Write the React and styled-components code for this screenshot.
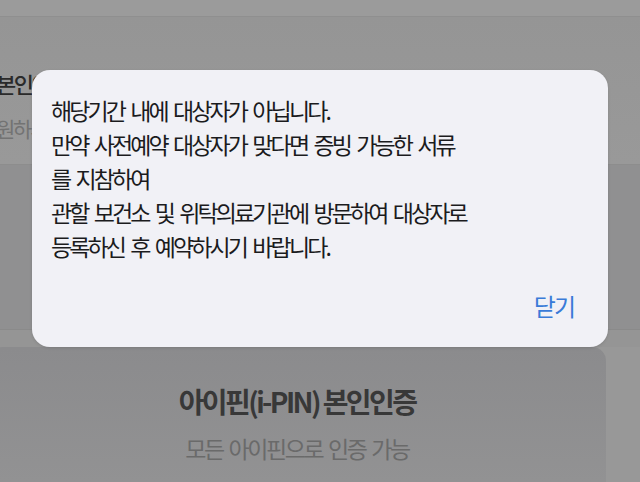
import React from "react";
import styled, { createGlobalStyle } from "styled-components";

const GlobalStyle = createGlobalStyle`
  html, body {
    margin: 0;
    padding: 0;
    background: #979797;
  }
  body {
    font-family: "Noto Sans CJK KR", "Noto Sans", sans-serif;
  }
`;

const lines = [
  "해당기간 내에 대상자가 아닙니다.",
  "만약 사전예약 대상자가 맞다면 증빙 가능한 서류",
  "를 지참하여",
  "관할 보건소 및 위탁의료기관에 방문하여 대상자로",
  "등록하신 후 예약하시기 바랍니다.",
];

const App = () => {
  const [open, setOpen] = React.useState(true);

  return (
    <>
      <GlobalStyle />
      <Page>
        <Header />
        <Intro>
          <Title>본인인증</Title>
          <Sub>원하시는 인증 방법</Sub>
        </Intro>
        <Panel />
        <Band />
        <Card>
          <CardTitle>아이핀(i-PIN) 본인인증</CardTitle>
          <CardSub>모든 아이핀으로 인증 가능</CardSub>
        </Card>

        {open ? (
          <Dialog>
            <Message>
              {lines.map((l, i) => (
                <Line key={i}>{l}</Line>
              ))}
            </Message>
            <Actions>
              <Close onClick={() => setOpen(false)}>닫기</Close>
            </Actions>
          </Dialog>
        ) : null}
      </Page>
    </>
  );
};

export default App;

const Page = styled.div`
  position: relative;
  width: 640px;
  height: 482px;
  overflow: hidden;
  display: flex;
  flex-direction: column;
  background: #989898;
`;

const Header = styled.div`
  height: 16px;
  flex-shrink: 0;
  background: #9b9b9b;
  border-bottom: 1px solid #8f8f8f;
`;

const Intro = styled.div`
  height: 148px;
  flex-shrink: 0;
  padding: 51px 0 0 0;
  box-sizing: border-box;
  background: linear-gradient(#959595, #999999);
  border-bottom: 1px solid #8d8d8d;
`;

const Title = styled.div`
  margin-left: -4px;
  font-size: 22px;
  font-weight: 500;
  letter-spacing: -2.4px;
  line-height: 30px;
  color: #2a2a2a;
  white-space: nowrap;
`;

const Sub = styled.div`
  margin: 16px 0 0 -4px;
  font-size: 21px;
  letter-spacing: -2.2px;
  line-height: 28px;
  color: #737373;
  white-space: nowrap;
`;

const Panel = styled.div`
  height: 164px;
  flex-shrink: 0;
  background: #909091;
  border-bottom: 1px solid #8a8a8a;
`;

const Band = styled.div`
  height: 17px;
  flex-shrink: 0;
  background: #959595;
`;

const Card = styled.div`
  flex: 1;
  margin: 0 34px 0 -12px;
  border-radius: 14px 14px 0 0;
  background: linear-gradient(#8b8b8d, #929293);
  display: flex;
  flex-direction: column;
  align-items: center;
  padding-top: 37px;
`;

const CardTitle = styled.div`
  font-size: 28px;
  font-weight: 700;
  letter-spacing: -2.6px;
  line-height: 34px;
  color: #383838;
`;

const CardSub = styled.div`
  margin-top: 15px;
  font-size: 23px;
  letter-spacing: -2.4px;
  word-spacing: 3px;
  line-height: 30px;
  color: #6a6a6a;
`;

const Dialog = styled.div`
  position: absolute;
  left: 32px;
  top: 70px;
  width: 576px;
  box-sizing: border-box;
  padding: 23px 34px 24px 19px;
  background: #f1f1f6;
  border-radius: 18px;
  box-shadow: 0 1px 3px rgba(0, 0, 0, 0.12);
`;

const Message = styled.div`
  font-size: 23px;
  font-weight: 400;
  letter-spacing: -2.9px;
  word-spacing: 4px;
  line-height: 34px;
  color: #1b1b1d;
`;

const Line = styled.div`
  white-space: nowrap;
`;

const Actions = styled.div`
  margin-top: 26px;
  display: flex;
  justify-content: flex-end;
`;

const Close = styled.button`
  border: none;
  background: none;
  padding: 0;
  font-family: inherit;
  font-size: 24px;
  letter-spacing: -2px;
  line-height: 34px;
  color: #3a7bd8;
  cursor: pointer;
`;
